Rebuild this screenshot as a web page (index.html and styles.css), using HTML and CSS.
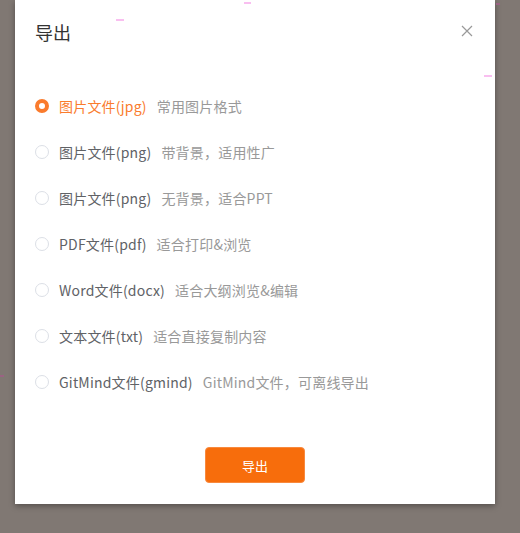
FILE: index.html
```html
<!DOCTYPE html>
<html lang="zh-CN">
<head>
    <meta charset="UTF-8">
    <meta name="viewport" content="width=device-width, initial-scale=1.0">
    <title>导出</title>
    <link rel="stylesheet" href="styles.css">
</head>
<body>
    <span class="mark mark-a"></span>
    <span class="mark mark-b"></span>
    <span class="mark mark-c"></span>
    <span class="mark mark-d"></span>
    <span class="mark mark-e"></span>
    <div class="modal">
        <div class="modal-header">
            <h2 class="modal-title">导出</h2>
            <button class="modal-close" aria-label="关闭">
                <svg width="12" height="12" viewBox="0 0 12 12">
                    <path d="M1 1L11 11M11 1L1 11" stroke="#999" stroke-width="1.2" fill="none"/>
                </svg>
            </button>
        </div>
        <div class="modal-body">
            <label class="option checked">
                <span class="radio"></span>
                <span class="option-name">图片文件(jpg)</span>
                <span class="option-desc">常用图片格式</span>
            </label>
            <label class="option">
                <span class="radio"></span>
                <span class="option-name">图片文件(png)</span>
                <span class="option-desc">带背景，适用性广</span>
            </label>
            <label class="option">
                <span class="radio"></span>
                <span class="option-name">图片文件(png)</span>
                <span class="option-desc">无背景，适合PPT</span>
            </label>
            <label class="option">
                <span class="radio"></span>
                <span class="option-name">PDF文件(pdf)</span>
                <span class="option-desc">适合打印&amp;浏览</span>
            </label>
            <label class="option">
                <span class="radio"></span>
                <span class="option-name">Word文件(docx)</span>
                <span class="option-desc">适合大纲浏览&amp;编辑</span>
            </label>
            <label class="option">
                <span class="radio"></span>
                <span class="option-name">文本文件(txt)</span>
                <span class="option-desc">适合直接复制内容</span>
            </label>
            <label class="option">
                <span class="radio"></span>
                <span class="option-name">GitMind文件(gmind)</span>
                <span class="option-desc">GitMind文件，可离线导出</span>
            </label>
        </div>
        <div class="modal-footer">
            <button class="btn-export">导出</button>
        </div>
    </div>
</body>
</html>
```

FILE: styles.css
```css
* { margin: 0; padding: 0; box-sizing: border-box; }
body {
    font-family: "Noto Sans CJK SC", "Noto Sans", sans-serif;
    background: #807873;
    color: #333;
    width: 520px;
    height: 533px;
    overflow: hidden;
    position: relative;
}
.modal {
    margin-left: 15px;
    width: 480px;
    background: #fff;
    box-shadow: 0 2px 6px rgba(0,0,0,0.35);
}
.modal-header {
    display: flex;
    justify-content: space-between;
    align-items: center;
    padding: 19px 22px 0 20px;
    height: 44px;
}
.modal-title {
    font-size: 18px;
    font-weight: 400;
    color: #333;
    line-height: 24px;
}
.modal-close {
    border: none;
    background: none;
    width: 12px;
    height: 12px;
    display: flex;
    margin-top: -2px;
}
.modal-body {
    padding: 39px 20px 0 20px;
}
.option {
    display: flex;
    align-items: center;
    height: 46px;
    font-size: 14px;
    letter-spacing: 0.2px;
}
.radio {
    width: 14px;
    height: 14px;
    border: 1px solid #dcdfe6;
    border-radius: 50%;
    margin-right: 10px;
    flex-shrink: 0;
}
.option-name {
    color: #606266;
    margin-right: 10px;
}
.option-desc {
    color: #999;
}
.option.checked .radio {
    border: 4.5px solid #fa7b2d;
    background: #fff;
}
.option.checked .option-name {
    color: #fa7b2d;
}
.modal-footer {
    display: flex;
    justify-content: center;
    padding: 42px 0 21px 0;
}
.btn-export {
    width: 100px;
    height: 36px;
    background: #f76d0c;
    color: #fff;
    border: 1px solid #f8893e;
    border-radius: 4px;
    font-family: "Noto Sans CJK SC", sans-serif;
    font-size: 13px;
}
.mark {
    position: absolute;
    height: 2px;
    background: #f9bff0;
    z-index: 2;
}
.mark-a { left: 116px; top: 19px; width: 8px; }
.mark-b { left: 244px; top: 2px; width: 7px; }
.mark-c { left: 484px; top: 75px; width: 8px; }
.mark-d { left: 496px; top: 3px; width: 4px; background: #9a6383; }
.mark-e { left: 0; top: 375px; width: 4px; background: #9a6383; }
```
